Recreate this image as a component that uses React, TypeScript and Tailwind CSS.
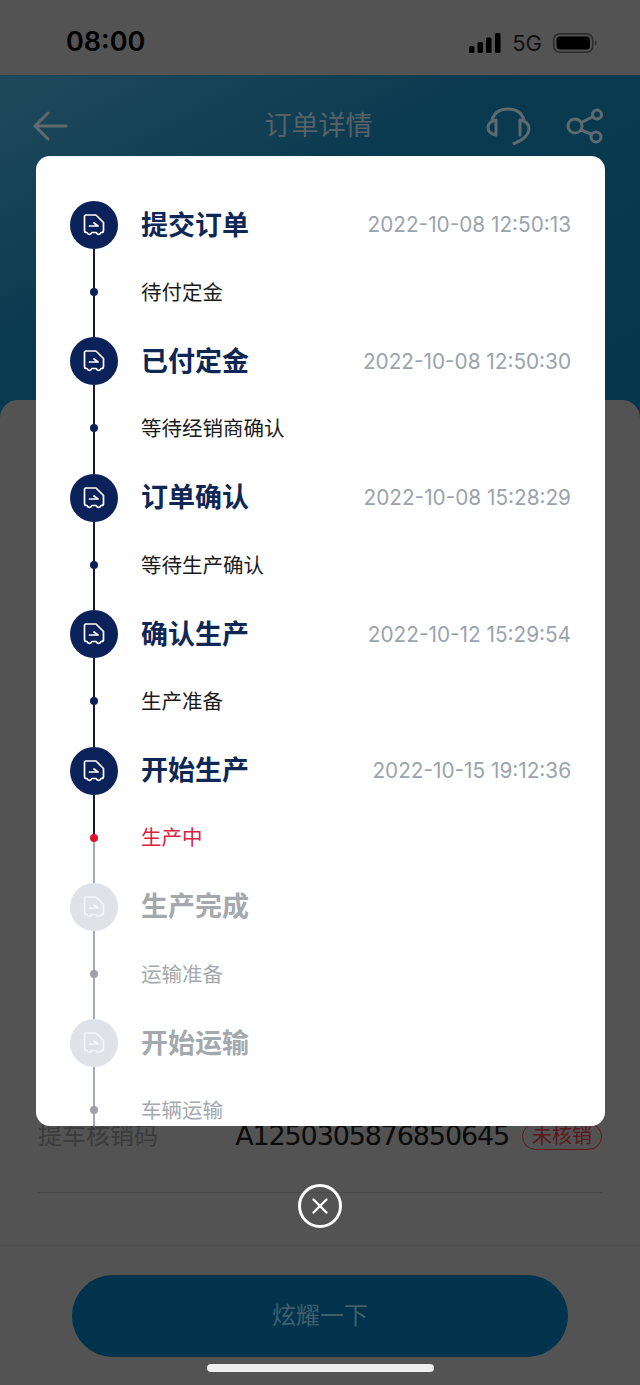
import { X } from 'lucide-react';

const steps = [
  { title: '提交订单', time: '2022-10-08 12:50:13', sub: '待付定金', state: 'done' },
  { title: '已付定金', time: '2022-10-08 12:50:30', sub: '等待经销商确认', state: 'done' },
  { title: '订单确认', time: '2022-10-08 15:28:29', sub: '等待生产确认', state: 'done' },
  { title: '确认生产', time: '2022-10-12 15:29:54', sub: '生产准备', state: 'done' },
  { title: '开始生产', time: '2022-10-15 19:12:36', sub: '生产中', state: 'current' },
  { title: '生产完成', time: '', sub: '运输准备', state: 'todo' },
  { title: '开始运输', time: '', sub: '车辆运输', state: 'todo' },
];

function TruckIcon() {
  return (
    <svg width="26" height="26" viewBox="0 0 26 26" fill="none" stroke="currentColor" strokeWidth="1.7" strokeLinecap="round" strokeLinejoin="round">
      <path d="M4.500 3h10.500l7.500 7.500v8a2 2 0 0 1-2 2h-.5a2.500 2.500 0 0 1-4.800 0h-4.400a2.500 2.500 0 0 1-4.800 0h-.5a2 2 0 0 1-2-2v-14a1.500 1.500 0 0 1 1.500-1.500z" />
      <path d="M8.500 14h8.500l-4-3" />
    </svg>
  );
}

function Step({ title, time, sub, state }: { title: string; time: string; sub: string; state: string }) {
  const todo = state === 'todo';
  const current = state === 'current';
  return (
    <div className="flex flex-col">
      <div className="flex h-12 items-center">
        <div className={`flex h-12 w-12 shrink-0 items-center justify-center rounded-full ${todo ? 'bg-[#dfe2e7] text-[#f4f5f7]' : 'bg-[#0a2259] text-white'}`}>
          <TruckIcon />
        </div>
        <span className={`ml-[23px] text-[27px] leading-none font-bold ${todo ? 'text-[#a4a9ae]' : 'text-[#0e2755]'}`}>{title}</span>
        <span className="ml-auto text-[20.750px] text-[#9aa3ad]">{time}</span>
      </div>
      <div className="flex h-[88.400px] items-center">
        <div className="relative flex h-full w-12 shrink-0 justify-center">
          {current ? (
            <div className="flex h-full w-0.5 flex-col">
              <div className="h-1/2 bg-[#111a33]" />
              <div className="h-1/2 bg-[#a3abb5]" />
            </div>
          ) : (
            <div className={`h-full w-0.5 ${todo ? 'bg-[#a3abb5]' : 'bg-[#111a33]'}`} />
          )}
          <div className={`absolute top-[39px] h-2 w-2 rounded-full ${current ? 'bg-[#e0122f]' : todo ? 'bg-[#9aa1a8]' : 'bg-[#0a2259]'}`} />
        </div>
        <span className={`ml-[23px] text-[20.500px] ${current ? 'text-[#d8213f]' : todo ? 'text-[#a4a9ae]' : 'text-[#1a1a1a]'}`}>{sub}</span>
      </div>
    </div>
  );
}

export default function App() {
  return (
    <div className="relative flex h-[1385px] w-[640px] flex-col overflow-hidden bg-[#535353] font-['Inter','Noto_Sans_CJK_SC',sans-serif]">
      {/* Status bar */}
      <div className="flex h-[75px] shrink-0 items-center justify-between pt-[10px] pr-[43px] pl-[66px]">
        <span className="text-[27px] font-semibold text-black">08:00</span>
        <div className="flex items-center">
          <svg width="32" height="20" viewBox="0 0 32 20" fill="#000">
            <rect x="0" y="13" width="5.500" height="7" rx="1.500" />
            <rect x="8.500" y="9" width="5.500" height="11" rx="1.500" />
            <rect x="17" y="4.500" width="5.500" height="15.500" rx="1.500" />
            <rect x="26" y="0" width="5.500" height="20" rx="1.500" />
          </svg>
          <span className="ml-[11px] text-[22px] leading-none text-[#111]">5G</span>
          <svg width="44" height="20" viewBox="0 0 44 20" fill="none" className="ml-[11px]">
            <rect x="0.750" y="0.750" width="39" height="18.500" rx="6" stroke="#2a2a2a" strokeWidth="1.500" />
            <rect x="3.500" y="3.500" width="33.500" height="13" rx="3.500" fill="#000" />
            <rect x="42" y="7.500" width="1.500" height="5" rx="0.750" fill="#333" />
          </svg>
        </div>
      </div>

      {/* Header */}
      <div className="flex h-[345px] shrink-0 items-start bg-gradient-to-br from-[#204a5c] via-[#0a3a50] via-40% to-[#03374e] pt-[31px] pr-[36px] pl-[33px]">
        <div className="relative flex h-10 w-full items-center justify-between">
          <svg width="36" height="32" viewBox="0 0 36 32" fill="none" stroke="#5f6a6f" strokeWidth="3" strokeLinecap="round" strokeLinejoin="round">
            <path d="M33 16H3M15 3 2 16l13 13" />
          </svg>
          <span className="absolute right-0 left-0 text-center text-[27px] text-[#566268]">订单详情</span>
          <div className="flex items-center gap-[34px]">
            <svg width="46" height="38" viewBox="0 0 46 38" fill="none" stroke="#5f6a6f" strokeWidth="3" strokeLinecap="round" strokeLinejoin="round">
              <path d="M6 13C8 6 14 2 22 2s14 4 16 11" />
              <path d="M10 13C5 14 2 17 2 20.500S5 27 10 28z" />
              <path d="M34 13c5 1 9 4 9 8.500 0 6-6 12-15 15" />
              <path d="M34 13v15" />
            </svg>
            <svg width="38" height="36" viewBox="0 0 38 36" fill="none" stroke="#5f6a6f" strokeWidth="3">
              <circle cx="9" cy="18" r="7" />
              <circle cx="31" cy="6.500" r="4.500" />
              <circle cx="30" cy="29" r="5" />
              <path d="M15.500 14.500 27 8.500M15 22 26 26.500" />
            </svg>
          </div>
        </div>
      </div>

      {/* Sheet under the dialog */}
      <div className="-mt-[20px] flex flex-1 flex-col justify-end rounded-t-[18px] bg-[#535353]">
        <div className="mx-[38px] flex h-[71px] items-start justify-between border-b border-[#484848]">
          <span className="text-[24px] leading-[28px] text-[#3b3b3b]">提车核销码</span>
          <div className="flex items-center gap-[13px]">
            <span className="font-['DejaVu_Sans','Noto_Sans_CJK_SC',sans-serif] text-[27px] leading-[28px] tracking-[-1.150px] text-[#0b0b0b]">A1250305876850645</span>
            <span className="flex h-[27px] w-[80px] items-center justify-center rounded-full border-[1.500px] border-[#5e1a1f] text-[20px] text-[#5a171c]">未核销</span>
          </div>
        </div>
        <div className="mt-[52px] flex h-[140px] flex-col items-center border-t border-[#4f4f4f] pt-[29px]">
          <button className="flex h-[82px] w-[496px] items-center justify-center rounded-full bg-[#01344c] text-[24px] text-[#3f5f6e]">炫耀一下</button>
          <div className="mt-[7px] h-2 w-[227px] rounded-full bg-[#efefef]" />
        </div>
      </div>

      {/* Dialog */}
      <div className="absolute top-[156px] left-[36px] h-[970px] w-[569px] overflow-hidden rounded-[14px] bg-white pt-[45px] pr-[34px] pl-[34px]">
        {steps.map((s) => (
          <Step key={s.title} {...s} />
        ))}
      </div>
      <button className="absolute top-[1184px] left-[298px] flex h-11 w-11 items-center justify-center rounded-full border-[3px] border-white text-white">
        <X size={26} strokeWidth={2.2} />
      </button>
    </div>
  );
}
